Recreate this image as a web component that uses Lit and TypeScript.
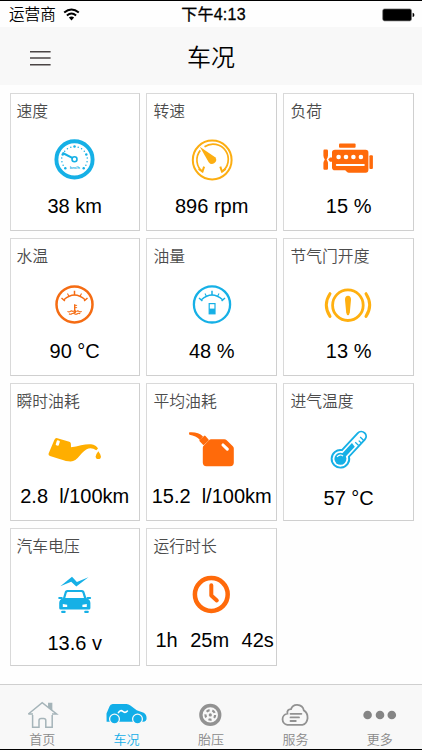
import { LitElement, html, svg, css } from "lit";
import { customElement, property } from "lit/decorators.js";
import { classMap } from "lit/directives/class-map.js";

const BLUE = "#16b0e6";
const AMBER = "#fcae12";
const ORANGE = "#ff6a0a";

const polar = (cx: number, cy: number, r: number, deg: number) => {
  const a = (deg * Math.PI) / 180;
  return [cx + r * Math.cos(a), cy + r * Math.sin(a)];
};

const dialArc = (cx: number, cy: number, color: string) => svg`
  <g fill="none" stroke=${color} stroke-width="1.5">
    <path d="M${cx - 10.6} ${cy - 4.4}Q${cx} ${cy - 14} ${cx + 10.6} ${cy - 4.4}"/>
    <path d="M${cx - 13} ${cy - 6.2}l3.4 3M${cx + 13} ${cy - 6.2}l-3.4 3M${cx} ${cy - 13.5}v4.5"/>
    <path stroke-width="1.1" d="M${cx - 7} ${cy - 10.6}l1.5 2.8M${cx + 7} ${cy - 10.6}l-1.5 2.8"/>
  </g>`;

const icons: Record<string, unknown> = {
  speed: svg`
    <circle cx="29.5" cy="24.4" r="18.1" fill="none" stroke=${BLUE} stroke-width="3.9"/>
    ${Array.from({ length: 17 }, (_, i) => {
      const [x, y] = polar(29.5, 24.4, 12.8, 136 + (i * 268) / 16);
      return svg`<circle cx=${x} cy=${y} r=${i % 4 === 0 ? 1.25 : 0.75} fill=${BLUE}/>`;
    })}
    <path d="M18.2 18.2l8.6 4.4" stroke=${BLUE} stroke-width="2.1" stroke-linecap="round"/>
    <circle cx="29.5" cy="24.3" r="2.5" fill="#fff" stroke=${BLUE} stroke-width="1.6"/>
    <text x="29.8" y="33.6" text-anchor="middle" font-size="4.4" font-weight="700" fill=${BLUE}>km/h</text>`,
  rpm: svg`
    <g fill="none" stroke=${AMBER}>
      <circle cx="30.2" cy="25" r="19.4" stroke-width="2"/>
      <path stroke-width="1.7" d="M22.5 11.8A15.2 15.2 0 0 1 39.6 37M18.3 15.4A15.2 15.2 0 0 0 20.8 37"/>
      <path stroke-width="2" d="M38.3 31.6l1.6 4.9 3.8-2.6M22.1 31.6l-1.6 4.9-3.8-2.6"/>
    </g>
    <path fill=${AMBER} d="M17.8 11.8L33.2 22.2A3.9 3.9 0 1 1 26.7 27.2Z"/>`,
  engine: svg`
    <g fill=${ORANGE}>
      <rect x="20" y="8.6" width="16.6" height="4.2" rx="1"/>
      <path d="M16 14.7H46.6Q49.4 14.7 49.4 17.5V34.8Q49.4 37.7 46.6 37.7H30Q28.6 37.7 27.8 36.8L26.2 35.2H16Q13 35.2 13 32.4V17.5Q13 14.7 16 14.7Z"/>
      <rect x="50.4" y="20.2" width="3.5" height="13.7" rx="1"/>
      <path d="M5.4 14.6H7.8Q9 14.6 9 16V20.5Q9 22.3 7.6 24.5Q9 26.7 9 28.5V33.4Q9 34.8 7.8 34.8H5.4Q4.4 34.8 4.4 33.4V28.5Q4.4 26.7 5.8 24.5Q4.4 22.3 4.4 20.5V16Q4.4 14.6 5.4 14.6Z"/>
      <path d="M9.2 24.6L11 22.6H14V26.8H11Z"/>
    </g>
    <g fill="#fff">
      <circle cx="19.6" cy="22" r="2.3"/><circle cx="27" cy="22" r="2.3"/>
      <circle cx="34.4" cy="22" r="2.3"/><circle cx="41.9" cy="22" r="2.3"/>
      <rect x="16.8" y="29" width="29" height="2" rx="1"/>
    </g>`,
  water: svg`
    <circle cx="29.5" cy="24.4" r="18" fill="none" stroke="#f56c13" stroke-width="2.5"/>
    ${dialArc(29.5, 24.2, "#f56c13")}
    <g fill="none" stroke="#f56c13">
      <path stroke-width="1.4" d="M29.7 24.3v7"/>
      <path stroke-width=".9" d="M30 25.4h2.1M30 27.6h2.1"/>
      <circle cx="29.7" cy="31.6" r=".9" stroke-width="1.3"/>
      <path stroke-width="1.1" d="M22.5 31.4q1.4 1.2 2.8 0t2.6.2M31.4 31.6q1.3-1.2 2.5-.2t2.8 0M24 33.7q1.4 1 2.8 0t2.8 0 2.8 0 2.8 0"/>
    </g>`,
  fuel: svg`
    <circle cx="30" cy="24.4" r="18.1" fill="none" stroke=${BLUE} stroke-width="2.3"/>
    ${dialArc(30, 24.2, BLUE)}
    <rect x="27.2" y="23.6" width="5.8" height="10.2" fill="#fff" stroke=${BLUE} stroke-width="1.2"/>
    <rect x="27.2" y="28.6" width="5.8" height="5.2" fill=${BLUE}/>`,
  throttle: svg`
    <g fill="none" stroke="#ffb010" stroke-width="2.8">
      <circle cx="28.9" cy="25.2" r="15.3"/>
      <path stroke-width="3" stroke-linecap="round" d="M11 13.7Q3.6 25 11 36.4M47 13.7Q54.4 25 47 36.4"/>
    </g>
    <path fill="#ffb010" d="M29 15.8Q32.2 16 32 20L30.8 32.5Q30.3 35.2 29 35.2T27.2 32.5L26 20Q25.8 16 29 15.8Z"/>`,
  oil: svg`
    <path fill="#ffae00" d="M12.4 13.2L24.3 16.7Q25.8 17.3 25.9 18.8L26 22.2Q31 21.8 36 20.3Q42 18.9 46 19.3Q51.3 20 53 23.6L51.3 25.3Q47 22.4 43.5 23.6Q39 25.3 34.4 31Q30.5 36.2 25.8 36.5Q22 36.6 14.5 34L5 31Q3 30.2 3.6 28.4L9.3 15Q10.3 12.7 12.4 13.2Z"/>
    <rect x="11.2" y="15.4" width="3.2" height="5.2" rx=".9" fill="#fff" transform="rotate(17 12.8 18)"/>
    <path fill="#ffae00" d="M53.3 26.3Q55.9 29.6 55.9 31.4A2.6 2.6 0 0 1 50.7 31.4Q50.7 29.6 53.3 26.3Z"/>`,
  can: svg`
    <g fill=${ORANGE}>
      <path d="M29 14.3H42.3Q43.7 14.3 44.7 15.3L50.8 21.2Q51.8 22.2 51.8 23.6V37.6Q51.8 41.2 48.2 41.2H24.4Q20.8 41.2 20.8 37.6V22.8Q20.8 21.4 21.8 20.4L27 15.3Q27.9 14.3 29 14.3Z"/>
      <rect x="18.2" y="12" width="7.8" height="6.6" rx="1" transform="rotate(-42 22.1 15.3)"/>
      <path d="M7.3 7.3Q16 6.6 21 11.4L18 14.9Q14 10.8 7.4 9.8Q6.6 8.4 7.3 7.3Z"/>
    </g>
    <path d="M41 20L45.3 24.1" stroke="#fff" stroke-width="3.1" stroke-linecap="round"/>`,
  thermometer: svg`
    <g transform="translate(21.4 33.8) rotate(43)">
      <path fill="none" stroke=${BLUE} stroke-width="1.9" d="M-4.8-7.4V-30.6A4.8 4.8 0 0 1 4.8-30.6V-7.4A8.8 8.8 0 1 1-4.8-7.4Z"/>
      <circle r="6" fill=${BLUE}/>
      <path fill=${BLUE} d="M-2.3-4V-19.4L2.3-18.6V-4Z"/>
      <path stroke=${BLUE} stroke-width="1.3" d="M-.4-29.4H4.2M1-25.8H4.2M-.4-22.2H4.2"/>
      <path d="M-3.6 1A3.7 3.7 0 0 1 .2-3.7" fill="none" stroke="#fff" stroke-width="1.1"/>
    </g>`,
  voltage: svg`
    <g fill=${BLUE}>
      <path d="M15.3 16.2L27 6.8L31.9 11.9L43.4 7.2L31.3 16.6L26.2 11.8Z"/>
      <path fill-rule="evenodd" d="M22.2 19.9H37Q38.7 19.9 39.3 21.5L41.4 28Q45.4 29.6 45.4 33V38Q45.4 39.5 44 39.5H15.6Q14.2 39.5 14.2 38V33Q14.2 29.6 18 28L19.9 21.5Q20.5 19.9 22.2 19.9ZM23 21.9Q22 21.9 21.7 22.9L20.3 28H39L37.5 22.9Q37.2 21.9 36.2 21.9ZM17.8 34V36.9H22.2V34.8ZM41.8 34V36.9H37.4V34.8Z"/>
      <rect x="13.2" y="27" width="4.6" height="2.1" rx="1"/>
      <rect x="41.5" y="27" width="4.6" height="2.1" rx="1"/>
      <rect x="16.1" y="40.7" width="4.6" height="2.3" rx="1"/>
      <rect x="39.2" y="40.7" width="4.6" height="2.3" rx="1"/>
    </g>`,
  clock: svg`
    <g fill="none" stroke=${ORANGE} stroke-linecap="round" stroke-linejoin="round">
      <circle cx="29.3" cy="24.5" r="16.4" stroke-width="4.5"/>
      <path stroke-width="4" d="M29.3 15.2V25.4L34.8 30.4"/>
    </g>`,
};

const tabIcons: Record<string, unknown> = {
  home: svg`
    <g fill="none" stroke="#a5b4b9" stroke-width="1.5">
      <path d="M16.6 14V26.3H23V19.5Q23 17.6 25.2 17.6H27.6Q29.8 17.6 29.8 19.5V26.3H36.2V14"/>
      <path d="M12.4 13L26.2 1.7L40.6 13H36"/>
      <path d="M12.4 13H17"/>
      <path fill="#a5b4b9" d="M32.8 6.2V2.6H35.6V8.4Z"/>
    </g>`,
  car: svg`
    <g transform="translate(-.8 0)">
      <path fill="#12aee8" d="M6.4 20.8L6.3 12.5L9.4 5.2Q10 3.4 12.5 3H26.3Q28.4 3.1 30.2 4.4L36.5 9.2L43.5 11.8Q46.4 13.4 46.4 17.2Q46.3 20.4 43 20.8Z"/>
      <g fill="#12aee8" stroke="#f8f8f8" stroke-width="1.3">
        <circle cx="14.3" cy="18.1" r="4.9"/><circle cx="37.3" cy="18.1" r="4.9"/>
      </g>
      <path fill="none" stroke="#fff" stroke-width="1.6" stroke-linecap="round" d="M18.2 11.6Q20.4 8.4 22.6 10.4T27.2 10"/>
    </g>`,
  tire: svg`
    <circle cx="25.3" cy="13.9" r="9.4" fill="none" stroke="#929292" stroke-width="3.4"/>
    <circle cx="25.3" cy="13.9" r="4.8" fill="none" stroke="#929292" stroke-width="2.2" stroke-dasharray="3.2 2.83"/>
    <circle cx="25.3" cy="13.9" r="1.6" fill="#929292"/>`,
  cloud: svg`
    <g fill="none" stroke="#929292" stroke-width="1.8" stroke-linecap="round">
      <path d="M18.4 23.8A5.6 5.6 0 0 1 18.4 12.7Q17.7 8.3 22 8.1Q23.6 3.6 28.2 3.8Q34 4.2 34.8 9.4Q38.8 11.6 38.6 17.2Q37.8 23.3 33.4 23.8Z"/>
      <path d="M21.5 12.8H32.4M21.5 16.4H30M21.5 20H26.8"/>
    </g>`,
  more: svg`
    <g fill="#858585"><circle cx="13.6" cy="14" r="4.3"/><circle cx="26" cy="14" r="4.3"/><circle cx="37.8" cy="14" r="4.3"/></g>`,
};

interface Metric {
  title: string;
  icon: string;
  parts: string[];
  low?: boolean;
}

const metrics: Metric[] = [
  { title: "速度", icon: "speed", parts: ["38 km"] },
  { title: "转速", icon: "rpm", parts: ["896 rpm"] },
  { title: "负荷", icon: "engine", parts: ["15 %"] },
  { title: "水温", icon: "water", parts: ["90 °C"] },
  { title: "油量", icon: "fuel", parts: ["48 %"] },
  { title: "节气门开度", icon: "throttle", parts: ["13 %"] },
  { title: "瞬时油耗", icon: "oil", parts: ["2.8  l/100km"] },
  { title: "平均油耗", icon: "can", parts: ["15.2  l/100km"] },
  { title: "进气温度", icon: "thermometer", parts: ["57 °C"], low: true },
  { title: "汽车电压", icon: "voltage", parts: ["13.6 v"], low: true },
  { title: "运行时长", icon: "clock", parts: ["1h", "25m", "42s"] },
];

const tabs = [
  { label: "首页", icon: "home" },
  { label: "车况", icon: "car" },
  { label: "胎压", icon: "tire" },
  { label: "服务", icon: "cloud" },
  { label: "更多", icon: "more" },
];

@customElement("metric-card")
class MetricCard extends LitElement {
  @property({ attribute: false }) metric!: Metric;

  static styles = css`
    :host {
      display: flex;
      flex-direction: column;
      align-items: center;
      box-sizing: border-box;
      border: 1px solid #d9d9d9;
      border-right-color: #cfcfcf;
      border-bottom-color: #cfcfcf;
      background: #fff;
    }
    .title {
      align-self: stretch;
      height: 24px;
      margin: 6px 0 11px 6px;
      font-size: 15.8px;
      line-height: 24px;
      font-weight: 350;
      color: #4c4c4c;
      white-space: nowrap;
    }
    .icon {
      width: 60px;
      height: 50px;
      flex: none;
    }
    .value {
      margin-top: 9px;
      font-size: 20px;
      line-height: 24px;
      color: #000;
      white-space: pre;
    }
    .low {
      margin-top: 11px;
    }
    .duration {
      display: flex;
      align-self: stretch;
      justify-content: space-between;
      margin-top: 8px;
      padding: 0 2px 0 8px;
    }
  `;

  render() {
    const m = this.metric;
    const split = m.parts.length > 1;
    return html`
      <div class="title">${m.title}</div>
      <svg class="icon" viewBox="0 0 60 50">${icons[m.icon]}</svg>
      <div class=${classMap({ value: true, low: !!m.low, duration: split })}>${split
        ? m.parts.map((p) => html`<span>${p}</span>`)
        : m.parts[0]}</div>
    `;
  }
}

@customElement("app-root")
class AppRoot extends LitElement {
  static styles = css`
    :host {
      display: flex;
      flex-direction: column;
      box-sizing: border-box;
      width: 422px;
      height: 750px;
      overflow: hidden;
      background: #fefefe;
      border-top: 1px solid #000;
      border-bottom: 1px solid #000;
      font-family: "Liberation Sans", "Noto Sans CJK SC", sans-serif;
      color: #000;
    }
    .status {
      display: grid;
      grid-template-columns: 1fr auto 1fr;
      align-items: center;
      height: 26px;
      padding: 1px 7px 0 9px;
      box-sizing: border-box;
      font-size: 15.6px;
      line-height: 25px;
    }
    .carrier {
      display: flex;
      align-items: center;
      gap: 7px;
      font-weight: 350;
    }
    .time {
      font-weight: 400;
      font-size: 16px;
      letter-spacing: 0.25px;
      padding-left: 3px;
      -webkit-text-stroke: 0.3px #000;
    }
    .battery {
      justify-self: end;
    }
    .nav {
      display: grid;
      grid-template-columns: 1fr auto 1fr;
      align-items: center;
      box-sizing: border-box;
      height: 58px;
      padding: 3px 30px 0;
      background: #f8f8f8;
    }
    .heading {
      font-size: 24px;
      line-height: 36px;
      font-weight: 350;
      margin: 0;
    }
    .cards {
      flex: 1;
      display: grid;
      grid-template-columns: repeat(3, 130.4px);
      grid-auto-rows: 138px;
      gap: 7px 6.6px;
      padding: 8px 0 0 9.5px;
      align-content: start;
    }
    .tabs {
      display: grid;
      grid-template-columns: repeat(5, 1fr);
      box-sizing: border-box;
      height: 65px;
      border-top: 1px solid #cfcfcf;
      background: #f8f8f8;
    }
    .tab {
      display: flex;
      flex-direction: column;
      align-items: center;
      padding-top: 16px;
      font-size: 13px;
      line-height: 18px;
      font-weight: 350;
      color: #8a8a8a;
    }
    .tab svg {
      flex: none;
      margin-bottom: 2px;
    }
    .active {
      color: #12aee8;
    }
  `;

  render() {
    return html`
      <div class="status">
        <div class="carrier">
          <span>运营商</span>
          <svg width="17" height="13" viewBox="0 0 17 13">
            <g fill="none" stroke="#000" stroke-width="2">
              <path d="M1.2 4.6Q8.5-1.6 15.8 4.6"/>
              <path d="M3.9 7.5Q8.5 3.6 13.1 7.5"/>
            </g>
            <path d="M8.5 12.4L5.9 9.6Q8.5 7.4 11.1 9.6Z"/>
          </svg>
        </div>
        <div class="time">下午4:13</div>
        <svg class="battery" width="33" height="14" viewBox="0 0 33 14">
          <rect x=".7" y=".9" width="28.8" height="12" rx="1.8" fill="#000" stroke="#777" stroke-width=".7"/>
          <path d="M30.6 4.8Q32.4 5.2 32.4 6.9T30.6 9Z"/>
        </svg>
      </div>
      <div class="nav">
        <svg width="21" height="16" viewBox="0 0 21 16">
          <path d="M0 1.8H20.6M0 8H20.6M0 14.8H20.6" stroke="#4a4444" stroke-width="1.5"/>
        </svg>
        <h1 class="heading">车况</h1>
      </div>
      <div class="cards">
        ${metrics.map((m) => html`<metric-card .metric=${m}></metric-card>`)}
      </div>
      <div class="tabs">
        ${tabs.map(
          (t, i) => html`
            <div class=${classMap({ tab: true, active: i === 1 })}>
              <svg width="52" height="28" viewBox="0 0 52 28">${tabIcons[t.icon]}</svg>
              <span>${t.label}</span>
            </div>
          `
        )}
      </div>
    `;
  }
}
